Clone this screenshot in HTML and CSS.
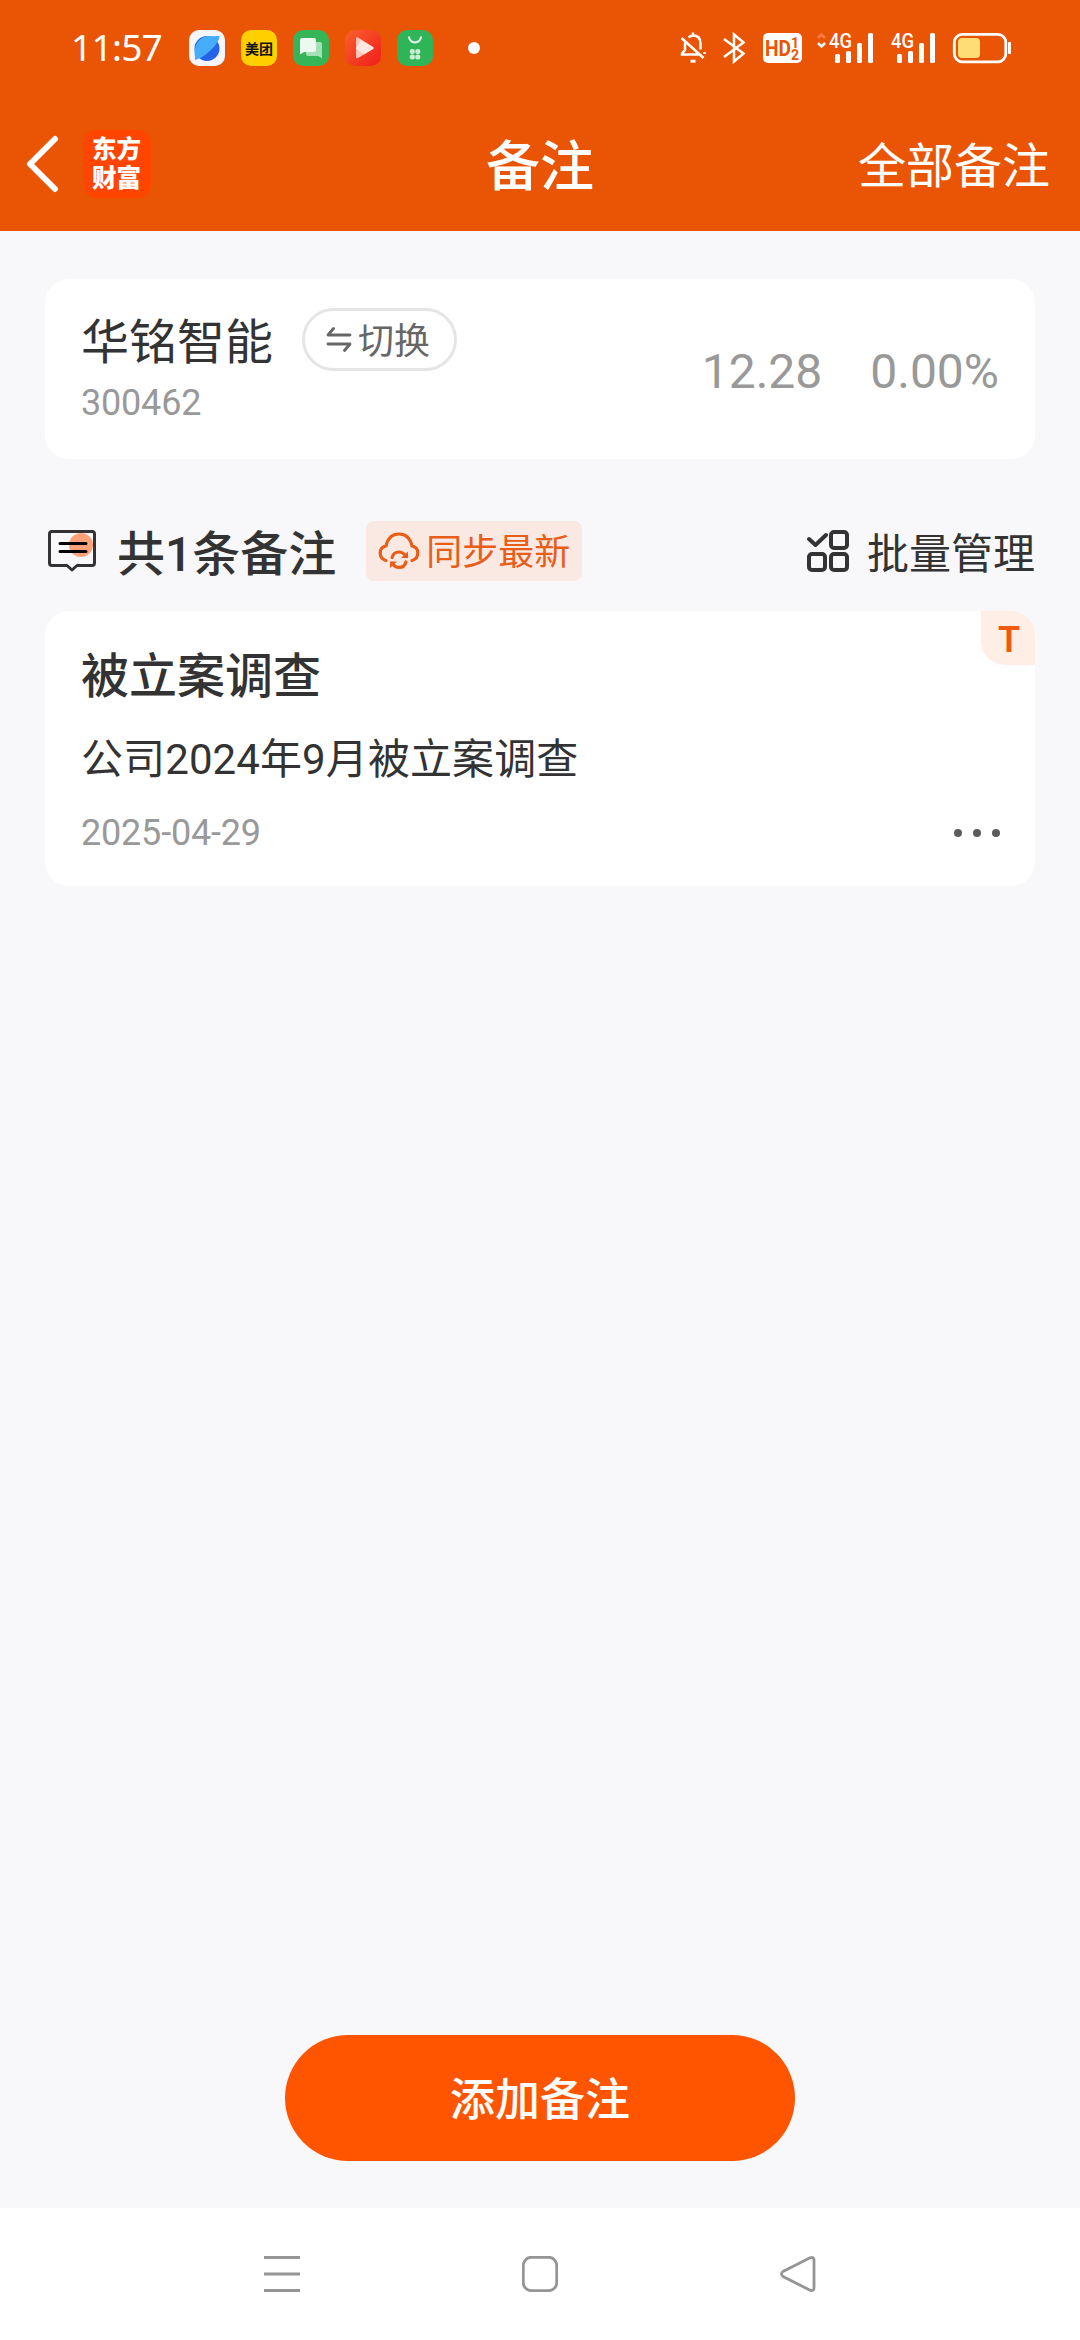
FILE: index.html
```html
<!DOCTYPE html>
<html lang="zh-CN">
<head>
<meta charset="utf-8">
<title>备注</title>
<link rel="stylesheet" href="styles.css">
</head>
<body>
<header class="top">
  <div class="status">
    <span class="time">11:57</span>
    <div class="apps">
      <svg class="app" viewBox="0 0 36 36"><rect width="36" height="36" rx="10" fill="#f4f6fa"/><circle cx="18" cy="18.500" r="12.500" fill="#2563e8"/><path d="M6 27C4 15 11 6 20 6c3 0 6 .6 10-.2 1.500 1.200-1 6-3.500 9.200C22 21 12 29 6 30z" fill="#46adfb"/></svg>
      <span class="app app-yellow">美团</span>
      <svg class="app" viewBox="0 0 36 36"><rect width="36" height="36" rx="10" fill="#36b558"/><path d="M15 12h12q2 0 2 2v14.500L25.500 26H15q-2 0-2-2V14q0-2 2-2z" fill="#a5dfb4"/><path d="M9 8h12q2 0 2 2v10q0 2-2 2H11l-4 2.500V10q0-2 2-2z" fill="#ecf9ef"/></svg>
      <svg class="app" viewBox="0 0 36 36"><defs><linearGradient id="play" x2="1" y2="1"><stop stop-color="#f8612c"/><stop offset="1" stop-color="#f01d1c"/></linearGradient></defs><rect width="36" height="36" rx="10" fill="url(#play)"/><path d="M11 8.500q0-2 2-1l15 9.500q1.500 1 0 2L13 28q-2 1-2-1z" fill="#fbc4b6"/><path d="m16 10 12 7q1.500 1 0 2l-9 5.500-8-6z" fill="#fff" opacity=".6"/></svg>
      <svg class="app" viewBox="0 0 36 36"><rect width="36" height="36" rx="10" fill="#2fb457"/><path d="M12 6.500a6 6 0 0 0 12 0" fill="none" stroke="#e8f8ec" stroke-width="2"/><g fill="#c9eed2"><rect x="12.800" y="19" width="5" height="5" rx="2"/><rect x="18.300" y="19" width="5" height="5" rx="2"/><rect x="12.800" y="24.500" width="5" height="5" rx="2"/><rect x="18.300" y="24.500" width="5" height="5" rx="2"/></g></svg>
    </div>
    <i class="dot"></i>
    <svg class="sys" viewBox="0 0 336 36" width="336" height="36">
      <g fill="none" stroke="#fff" stroke-width="2.500">
        <path d="M8.500 7.500Q11 5.500 13 5.500q7.500 0 7.500 8v6M5 12.500V20l-3 3.500v1h17M1.500 8l22 20M13 2.500v3M24.500 22v2"/>
        <path d="M10.500 31.200h5" stroke-width="3"/>
        <path d="m44 9 19.500 14.500-9.500 8V4.500l9.500 8L44 27"/>
      </g>
      <rect x="83" y="3" width="39" height="30" rx="5" fill="#fff"/>
      <g fill="#e95504" font-family="Roboto, sans-serif" font-weight="700">
        <text x="85" y="26" font-size="22" textLength="26" lengthAdjust="spacingAndGlyphs">HD</text>
        <text x="111" y="18" font-size="14" textLength="8">1</text>
        <text x="111" y="30" font-size="14" textLength="8">2</text>
      </g>
      <path d="m138 8 3.500-3.500L145 8" fill="none" stroke="#ff7c42" stroke-width="2.500"/>
      <path d="m138 13 3.500 3.500 3.500-3.500" fill="none" stroke="#fff" stroke-width="2.500"/>
      <g fill="#fff">
        <g id="sig"><text x="149" y="18" font-size="20" font-weight="500" font-family="Roboto, sans-serif" textLength="23" lengthAdjust="spacingAndGlyphs">4G</text>
        <rect x="155" y="24" width="5" height="9" rx="1.500"/><rect x="166" y="21" width="5" height="12" rx="1.500"/><rect x="177" y="13" width="5" height="20" rx="1.500"/><rect x="188" y="3" width="5" height="30" rx="1.500"/></g>
        <use href="#sig" x="62"/>
        <rect x="328" y="12" width="3" height="12" rx="1"/>
      </g>
      <rect x="274.300" y="4.300" width="51.500" height="27.500" rx="8" fill="none" stroke="#fff" stroke-width="2.800"/>
      <rect x="278" y="8" width="22" height="20" rx="4" fill="#ffdd76"/>
    </svg>
  </div>
  <nav class="bar">
    <div class="bar-left">
      <svg width="34" height="60" viewBox="0 0 34 60"><path d="M29 5 4 30l25 25" fill="none" stroke="#fff" stroke-width="6" stroke-linecap="round" stroke-linejoin="round"/></svg>
      <div class="brand">东方<br>财富</div>
    </div>
    <h1 class="title medium">备注</h1>
    <a class="all">全部备注</a>
  </nav>
</header>
<main class="page">
  <section class="card stock">
    <div class="stock-info">
      <div class="stock-head">
        <span class="stock-name">华铭智能</span>
        <span class="switch"><svg width="26" height="26" viewBox="0 0 26 26"><path d="M24 9H2l5.500-6.500M2 18h22l-5.500 6.500" fill="none" stroke="#666" stroke-width="2.800" stroke-linecap="round" stroke-linejoin="round"/></svg><span>切换</span></span>
      </div>
      <span class="code">300462</span>
    </div>
    <span class="price">12.28</span>
    <span class="price">0.00%</span>
  </section>
  <div class="toolbar">
    <svg class="note-icon" width="48" height="43" viewBox="0 0 48 43"><circle cx="33" cy="15" r="12" fill="#ffa27a"/><path d="M4 1.500h40q2.500 0 2.500 2.500v29q0 2.500-2.500 2.500H29L24 40l-5-4.500H4Q1.500 35.500 1.500 33V4Q1.500 1.500 4 1.500z" fill="none" stroke="#333" stroke-width="3" stroke-linejoin="round"/><path d="M12 13.500h26M12 21.500h26" stroke="#000" stroke-width="3" stroke-linecap="round"/></svg>
    <span class="count medium">共1条备注</span>
    <span class="sync"><svg width="42" height="38" viewBox="0 0 42 38"><g fill="none" stroke="#e85d18" stroke-width="3.200" stroke-linecap="round"><path d="M8 28.500C0 26 .5 15.500 8 14 10 5 15 2 21 2s11 3 13 12c7.500 1.500 8 12 0 14.500"/><path d="M14 25.500q1.500-5.500 7-5.500 3.500 0 6 3M28 30q-1.500 5.500-7 5.500-3.500 0-6-3"/></g><path d="M30 19.500v6.500h-7zM12 36v-6.500h7z" fill="#e85d18"/></svg><span>同步最新</span></span>
    <span class="manage"><svg width="42" height="42" viewBox="0 0 42 42"><g fill="none" stroke="#333" stroke-width="4"><path d="m2 9 6.500 6L19 5" stroke-linecap="round" stroke-linejoin="round"/><rect x="24" y="2" width="16" height="16" rx="3"/><rect x="2" y="24" width="16" height="16" rx="3"/><rect x="24" y="24" width="16" height="16" rx="3"/></g></svg><span>批量管理</span></span>
  </div>
  <article class="card note">
    <span class="tag">T</span>
    <h2 class="note-title medium">被立案调查</h2>
    <p class="note-text">公司2024年9月被立案调查</p>
    <div class="note-foot"><time>2025-04-29</time><span class="more"><i></i><i></i><i></i></span></div>
  </article>
  <button class="add medium">添加备注</button>
</main>
<footer class="sysnav">
  <svg width="36" height="36" viewBox="0 0 36 36"><path d="M0 1.500h36M0 18h36M0 34.500h36"/></svg>
  <svg width="36" height="36" viewBox="0 0 36 36"><rect x="1.300" y="1.300" width="33.400" height="33.400" rx="8"/></svg>
  <svg width="36" height="36" viewBox="0 0 36 36"><path d="M3 15.500 30 1.800Q34 .5 34 4v28q0 3.500-4 2.200L3 20.500Q0 18 3 15.500z"/></svg>
</footer>
</body>
</html>
```
FILE: styles.css
```css
* { box-sizing: border-box; }
body {
  margin: 0;
  width: 1080px;
  height: 2340px;
  display: flex;
  flex-direction: column;
  background: #f8f8fa;
  color: #333;
  font-family: Roboto, "Noto Sans CJK SC", sans-serif;
  overflow: hidden;
}
h1, h2, p { margin: 0; font-weight: 400; }
svg { display: block; flex: none; }
.medium { font-weight: 500; }

.top { height: 231px; background: #e95504; color: #fff; }
.status { height: 96px; display: flex; align-items: center; padding: 0 69px 0 71px; }
.time { width: 118px; padding-bottom: 2px; font: 400 37px/50px "Noto Sans", sans-serif; letter-spacing: -.7px; }
.apps { display: flex; gap: 16px; }
.app { width: 36px; height: 36px; }
.app-yellow {
  border-radius: 10px;
  background: #ffd000;
  color: #111;
  font: 700 14px/36px "Noto Sans CJK SC", sans-serif;
  text-align: center;
}
.dot { width: 12px; height: 12px; margin-left: 35px; border-radius: 50%; background: #fff; }
.sys { margin-left: auto; margin-right: -5px; }

.bar { height: 135px; display: grid; grid-template-columns: 1fr auto 1fr; align-items: center; padding: 0 30px 0 26px; }
.bar-left { display: flex; align-items: center; gap: 23px; }
.brand {
  width: 68px;
  height: 68px;
  padding: 3px 0 0 9px;
  border-radius: 14px;
  background: #ff4500;
  font: 900 24.5px/29px "Noto Sans CJK SC", sans-serif;
}
.title { padding: 8px 0 0 4px; font-size: 54px; line-height: 72px; }
.all { justify-self: end; padding-top: 6px; font-size: 48px; line-height: 64px; }

.page { flex: 1; display: flex; flex-direction: column; padding: 48px 45px 47px; }
.card { background: #fff; border-radius: 24px; }
.stock { height: 180px; display: flex; align-items: center; padding: 0 36px; gap: 48px; }
.stock-info { flex: 1; }
.stock-head { display: flex; align-items: center; gap: 29px; height: 64px; }
.stock-name { padding-top: 7px; font-size: 48px; line-height: 64px; }
.switch {
  display: flex;
  align-items: center;
  gap: 6px;
  height: 63px;
  padding: 0 24px 0 21px;
  border: 3px solid #e5e5e5;
  border-radius: 32px;
  color: #666;
  font-size: 36px;
}
.switch span { padding-bottom: 2px; }
.code { display: block; height: 60px; color: #999; font-size: 36px; line-height: 65px; letter-spacing: -.2px; }
.price { color: #999; font-size: 48px; padding-top: 5px; }

.toolbar { height: 60px; margin: 62px 0 30px; display: flex; align-items: center; }
.note-icon { margin-left: 3px; }
.count { margin-left: 21px; padding-top: 7px; font-size: 48px; line-height: 60px; }
.sync {
  display: flex;
  align-items: center;
  gap: 6px;
  height: 60px;
  margin-left: 30px;
  padding: 0 12px;
  border-radius: 8px;
  background: #f9e9e2;
  color: #e85d18;
  font-size: 36px;
}
.sync span { padding-bottom: 4px; }
.manage { display: flex; align-items: center; gap: 18px; margin-left: auto; font-size: 42px; }
.manage span { padding-bottom: 2px; }

.note { position: relative; height: 275px; padding: 33px 36px 0; }
.tag {
  position: absolute;
  top: 0;
  right: 0;
  width: 54px;
  height: 54px;
  padding-left: 2px;
  border-radius: 0 24px 0 24px;
  background: #ffeee6;
  color: #f05a10;
  font-size: 36px;
  font-weight: 600;
  line-height: 58px;
  text-align: center;
}
.note-title { font-size: 48px; line-height: 66px; }
.note-text { margin-top: 20px; font-size: 42px; line-height: 60px; letter-spacing: .1px; }
.note-foot { display: flex; align-items: center; justify-content: space-between; margin-top: 18px; color: #999; font-size: 36px; line-height: 50px; }
.note-foot time { letter-spacing: -.2px; }
.more { display: flex; gap: 11px; margin-right: -1px; }
.more i { width: 8px; height: 8px; border-radius: 50%; background: #5c5c5c; }

.add {
  width: 510px;
  height: 126px;
  margin: auto auto 0;
  padding: 0 0 3px;
  border: 0;
  border-radius: 63px;
  background: #f50;
  color: #fff;
  font-family: inherit;
  font-size: 45px;
}

.sysnav { height: 132px; display: flex; justify-content: center; align-items: center; gap: 222px; background: #fff; }
.sysnav svg { fill: none; stroke: #959595; stroke-width: 2.8; }
```
